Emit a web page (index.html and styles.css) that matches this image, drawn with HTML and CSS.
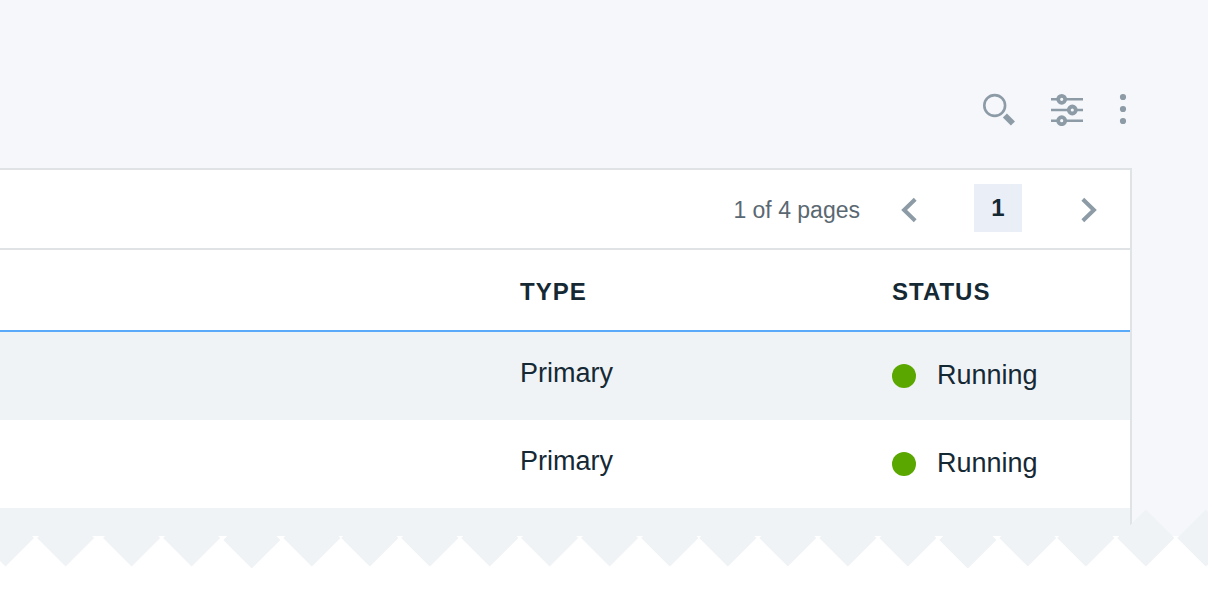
FILE: index.html
```html
<!DOCTYPE html>
<html lang="en">
<head>
<meta charset="utf-8">
<meta name="viewport" content="width=device-width, initial-scale=1">
<title>Instances</title>
<link rel="stylesheet" href="styles.css">
</head>
<body>
<main class="page">
  <div class="toolbar">
    <button class="tool" type="button" aria-label="Search">
      <svg width="34" height="34" viewBox="0 0 34 34" fill="none" stroke="currentColor">
        <circle cx="12.7" cy="13.5" r="10.4" stroke-width="2.6"/>
        <path d="M22.9 23.5l8 8" stroke-width="5.8"/>
      </svg>
    </button>
    <button class="tool" type="button" aria-label="Filter">
      <svg width="34" height="34" viewBox="0 0 34 34" fill="none" stroke="currentColor">
        <path d="M1 7.3h32M1 18h32M1 28.7h32" stroke-width="2.4"/>
        <g fill="#f5f7fb" stroke-width="3.8"><circle cx="11.7" cy="7.3" r="3.5"/><circle cx="22.3" cy="18" r="3.5"/><circle cx="11.7" cy="28.7" r="3.5"/></g>
      </svg>
    </button>
    <button class="tool" type="button" aria-label="More actions">
      <svg width="10" height="34" viewBox="0 0 10 34" fill="currentColor">
        <circle cx="5" cy="5" r="3.1"/><circle cx="5" cy="17" r="3.1"/><circle cx="5" cy="29" r="3.1"/>
      </svg>
    </button>
  </div>
  <section class="panel">
    <nav class="pagination" aria-label="Pagination">
      <span class="summary">1 of 4 pages</span>
      <button class="step" type="button" aria-label="Previous page">
        <svg width="18" height="26" viewBox="0 0 18 26" fill="none" stroke="currentColor" stroke-width="4"><path d="M15.2 2.3L4.1 13l11.1 10.7"/></svg>
      </button>
      <button class="current" type="button" aria-current="page">1</button>
      <button class="step" type="button" aria-label="Next page">
        <svg width="18" height="26" viewBox="0 0 18 26" fill="none" stroke="currentColor" stroke-width="4"><path d="M2.8 2.3L13.9 13 2.8 23.7"/></svg>
      </button>
    </nav>
    <table class="grid">
      <colgroup><col><col class="col-type"><col class="col-status"></colgroup>
      <thead>
        <tr><td></td><th scope="col">TYPE</th><th scope="col">STATUS</th></tr>
      </thead>
      <tbody>
        <tr><td></td><td>Primary</td><td><span class="status"><span class="dot"></span>Running</span></td></tr>
        <tr><td></td><td>Primary</td><td><span class="status"><span class="dot"></span>Running</span></td></tr>
        <tr class="cut"><td></td><td></td><td></td></tr>
      </tbody>
    </table>
  </section>
</main>
<div class="torn" aria-hidden="true">
  <svg width="1208" height="90" viewBox="0 510 1208 90">
    <defs><path id="tooth" d="M0-28.5L28.5 0 0 28.5-28.5 0z"/></defs>
    <g fill="#eff3f6">
      <use href="#tooth" x="5.5" y="538"/><use href="#tooth" x="65.6" y="538"/><use href="#tooth" x="131.6" y="538"/>
      <use href="#tooth" x="191.6" y="538"/><use href="#tooth" x="251.8" y="540"/><use href="#tooth" x="311.8" y="538"/>
      <use href="#tooth" x="369.8" y="538"/><use href="#tooth" x="429.8" y="538"/><use href="#tooth" x="489.8" y="538"/>
      <use href="#tooth" x="549.6" y="538"/><use href="#tooth" x="609.6" y="538"/><use href="#tooth" x="669.8" y="538"/>
      <use href="#tooth" x="727.8" y="538"/><use href="#tooth" x="787.8" y="538"/><use href="#tooth" x="847.8" y="538"/>
      <use href="#tooth" x="907.8" y="538"/><use href="#tooth" x="967.8" y="540"/><use href="#tooth" x="1027.8" y="538"/>
      <use href="#tooth" x="1085.8" y="538"/><use href="#tooth" x="1145.8" y="538"/><use href="#tooth" x="1205.8" y="538"/>
    </g>
  </svg>
</div>
</body>
</html>
```
FILE: styles.css
```css
* { box-sizing: border-box; }

body {
  margin: 0;
  background: #fff;
  color: #152935;
  font-family: "Liberation Sans", Arial, sans-serif;
}

button {
  padding: 0;
  border: 0;
  background: none;
  color: #8c9ba5;
  font: inherit;
}

svg { display: block; }

.page {
  padding-right: 76px;
  background: #f5f7fb;
}

.toolbar {
  display: flex;
  justify-content: flex-end;
  gap: 34px;
  padding: 92px 4px 42px 0;
}

.panel {
  border: solid #dfe3e6;
  border-width: 2px 2px 0 0;
  background: #fff;
}

.pagination {
  display: flex;
  align-items: flex-start;
  justify-content: flex-end;
  height: 80px;
  padding: 14px 32px 0 0;
  border-bottom: 2px solid #dfe3e6;
}

.summary,
.step {
  padding-top: 13px;
}

.summary {
  margin-right: 40px;
  color: #5a6872;
  font-size: 23px;
  line-height: 26px;
}

.current {
  width: 48px;
  height: 48px;
  margin: 0 58px 0 56px;
  background: #eaeef7;
  color: #152935;
  font-size: 24px;
  font-weight: 700;
}

.grid {
  width: 100%;
  border-collapse: separate;
  border-spacing: 0;
  table-layout: fixed;
}

.grid th,
.grid td {
  height: 88px;
  padding: 0;
  text-align: left;
  vertical-align: middle;
  font-size: 27px;
  line-height: 32px;
}

.grid tbody td { padding-bottom: 6px; }

.grid thead th,
.grid thead td {
  height: 82px;
  padding-top: 4px;
  border-bottom: 2px solid #5aaafa;
  font-size: 24px;
  letter-spacing: 1px;
}

.grid tbody tr:nth-child(odd) { background: #eff3f6; }

.grid .cut td {
  height: 28px;
  padding: 0;
  line-height: 0;
}

.col-type { width: 372px; }
.col-status { width: 238px; }

.status {
  display: flex;
  align-items: center;
  gap: 21px;
  padding-top: 4px;
}

.dot {
  width: 24px;
  height: 24px;
  margin-top: 2px;
  border-radius: 50%;
  background: #5aa700;
}

.torn {
  position: relative;
  display: flex;
  justify-content: flex-end;
  margin-top: -26px;
  overflow: hidden;
}

.torn svg { flex: none; }
```
